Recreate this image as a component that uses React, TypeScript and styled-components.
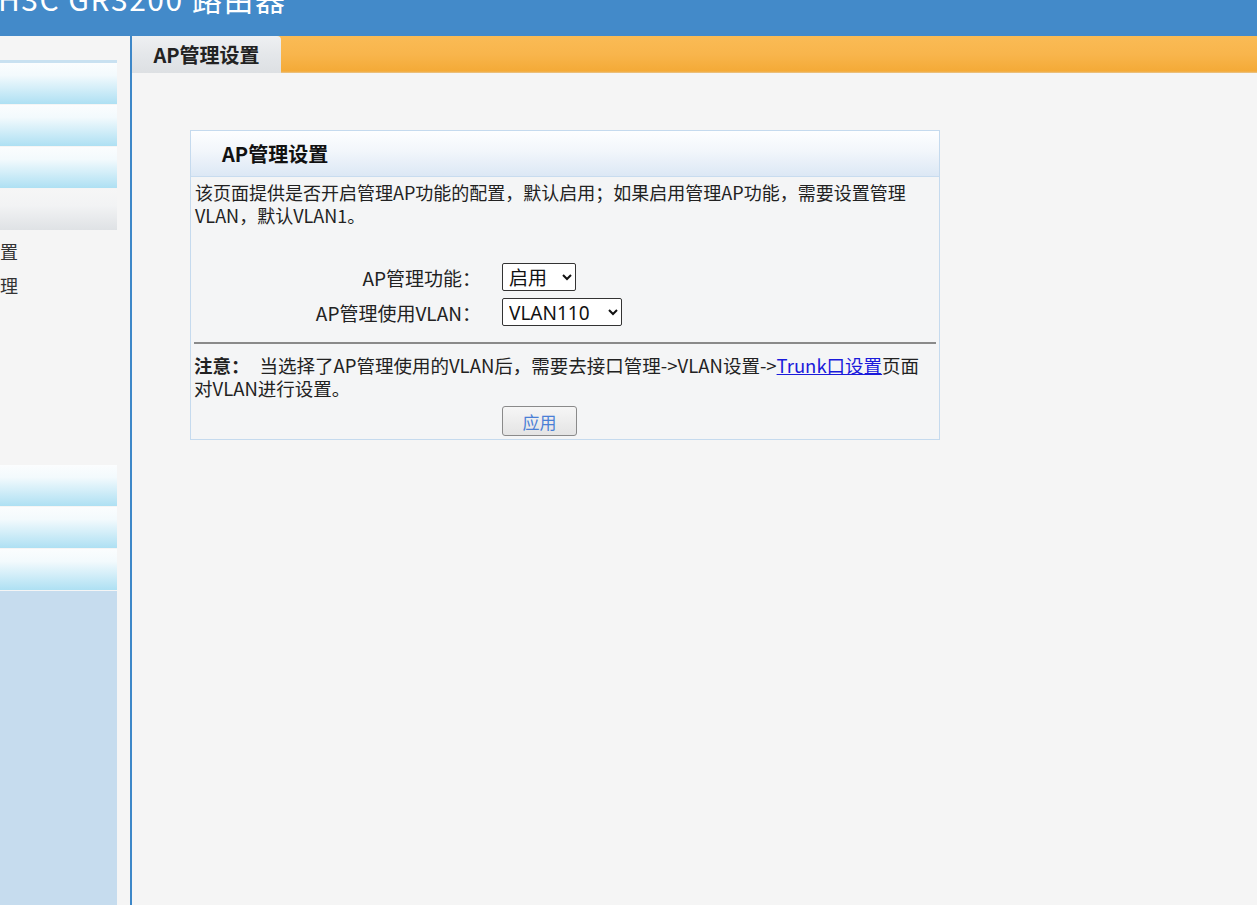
import React from "react";
import styled, { createGlobalStyle } from "styled-components";

const GlobalStyle = createGlobalStyle`
  html, body {
    margin: 0;
    padding: 0;
    background: #f5f5f5;
    overflow: hidden;
  }
  body {
    font-family: "Noto Sans CJK SC", "Noto Sans", sans-serif;
    color: #222;
  }
`;

const Page = styled.div`
  display: flex;
  flex-direction: column;
  height: 905px;
  width: 1257px;
`;

const TopBar = styled.header`
  height: 36px;
  background: #438ac9;
  overflow: hidden;
  flex-shrink: 0;
`;

const Brand = styled.div`
  margin: -17px 0 0 -2px;
  font-size: 30px;
  line-height: 30px;
  letter-spacing: 1.5px;
  color: #fff;
  white-space: nowrap;
`;

const Body = styled.div`
  display: flex;
  flex: 1;
  min-height: 0;
`;

const Sidebar = styled.nav`
  width: 130px;
  flex-shrink: 0;
  border-right: 2px solid #3d87c8;
  display: flex;
  flex-direction: column;
  padding-top: 24px;
  background: #f5f5f5;
`;

const MenuTop = styled.div`
  width: 117px;
  height: 3px;
  background: #c9e1f1;
`;

const MenuItem = styled.div<{ $active?: boolean }>`
  width: 117px;
  height: 41px;
  margin-bottom: 1px;
  background: ${({ $active }) =>
    $active
      ? "linear-gradient(to bottom, #f6f6f6 0%, #f2f3f4 40%, #dfe2e5 100%)"
      : "linear-gradient(to bottom, #fbfdfe 0%, #f3fafd 30%, #aee0f3 100%)"};
`;

const SubList = styled.div`
  padding-top: 3px;
  display: flex;
  flex-direction: column;
`;

const SubItem = styled.div`
  width: 18px;
  height: 34px;
  overflow: hidden;
  display: flex;
  justify-content: flex-end;
  align-items: center;
  white-space: nowrap;
  font-size: 18px;
  color: #333;
`;

const LowerMenu = styled.div`
  margin-top: 163px;
  display: flex;
  flex-direction: column;
`;

const MenuFill = styled.div`
  width: 117px;
  flex: 1;
  background: #c6dcee;
`;

const SidebarRest = styled.div`
  flex: 1;
  display: flex;
  flex-direction: column;
`;

const Main = styled.main`
  flex: 1;
  display: flex;
  flex-direction: column;
  min-width: 0;
`;

const TabBar = styled.div`
  height: 37px;
  display: flex;
  flex-shrink: 0;
  background: linear-gradient(to bottom, #fabb55 0%, #f8b54c 50%, #f4aa37 95%, #e8c690 100%);
`;

const Tab = styled.div`
  width: 149px;
  display: flex;
  align-items: center;
  justify-content: center;
  font-size: 20px;
  font-weight: bold;
  color: #222;
  border-top-right-radius: 4px;
  background: linear-gradient(to bottom, #eef0f2 0%, #e4e7ea 50%, #dde0e3 100%);
`;

const Content = styled.div`
  padding: 57px 0 0 58px;
`;

const Panel = styled.section`
  width: 748px;
  border: 1px solid #c5daee;
  background: #f4f5f6;
`;

const PanelHead = styled.div`
  height: 45px;
  display: flex;
  align-items: center;
  padding-left: 31px;
  font-size: 20px;
  font-weight: bold;
  color: #111;
  border-bottom: 1px solid #c8dcef;
  background: linear-gradient(to bottom, #fdfeff 0%, #f2f6fb 45%, #dce8f5 100%);
`;

const Text = styled.p`
  margin: 0;
  padding: 4px 12px 0 4px;
  font-size: 18px;
  line-height: 23px;
  color: #222;
`;

const Form = styled.div`
  display: grid;
  grid-template-columns: 290px auto;
  column-gap: 21px;
  row-gap: 7px;
  align-items: center;
  padding: 36px 0 16px;
`;

const Label = styled.label`
  justify-self: end;
  font-size: 19px;
  color: #222;
`;

const Select = styled.select<{ $w: number }>`
  justify-self: start;
  width: ${({ $w }) => $w}px;
  height: 28px;
  font-family: "Noto Sans", "Noto Sans CJK SC", sans-serif;
  font-size: 19px;
  color: #111;
  background: #fff;
  border: 1px solid #333;
  border-radius: 2px;
  padding: 0 2px;
`;

const Rule = styled.hr`
  margin: 0 3px;
  border: none;
  border-top: 2px solid #8a8a8a;
`;

const Note = styled.p`
  margin: 0;
  padding: 10px 14px 0 3px;
  font-size: 18.5px;
  line-height: 23px;
  color: #222;

  b {
    margin-right: 10px;
  }
  a {
    color: #1a1adb;
    text-decoration: underline;
  }
`;

const Actions = styled.div`
  display: flex;
  padding: 6px 0 3px 311px;
`;

const ApplyButton = styled.button`
  width: 75px;
  height: 30px;
  font-family: "Noto Sans CJK SC", sans-serif;
  font-size: 17px;
  color: #4a7fd6;
  border: 1px solid #8a8a8a;
  border-radius: 3px;
  background: linear-gradient(to bottom, #f6f6f6, #e4e4e4);
  cursor: pointer;
  padding: 0;
`;

export default function App() {
  return (
    <>
      <GlobalStyle />
      <Page>
        <TopBar>
          <Brand>H3C GR3200 路由器</Brand>
        </TopBar>
        <Body>
          <Sidebar>
            <MenuTop />
            <MenuItem />
            <MenuItem />
            <MenuItem />
            <MenuItem $active />
            <SubList>
              <SubItem>AP管理设置</SubItem>
              <SubItem>AP设备管理</SubItem>
            </SubList>
            <SidebarRest>
              <LowerMenu>
                <MenuItem />
                <MenuItem />
                <MenuItem />
              </LowerMenu>
              <MenuFill />
            </SidebarRest>
          </Sidebar>
          <Main>
            <TabBar>
              <Tab>AP管理设置</Tab>
            </TabBar>
            <Content>
              <Panel>
                <PanelHead>AP管理设置</PanelHead>
                <Text>
                  该页面提供是否开启管理AP功能的配置，默认启用；如果启用管理AP功能，需要设置管理VLAN，默认VLAN1。
                </Text>
                <Form>
                  <Label>AP管理功能：</Label>
                  <Select $w={74} defaultValue="on">
                    <option value="on">启用</option>
                    <option value="off">禁用</option>
                  </Select>
                  <Label>AP管理使用VLAN：</Label>
                  <Select $w={120} defaultValue="110">
                    <option value="1">VLAN1</option>
                    <option value="110">VLAN110</option>
                  </Select>
                </Form>
                <Rule />
                <Note>
                  <b>注意：</b>当选择了AP管理使用的VLAN后，需要去接口管理-&gt;VLAN设置-&gt;
                  <a href="#">Trunk口设置</a>页面对VLAN进行设置。
                </Note>
                <Actions>
                  <ApplyButton>应用</ApplyButton>
                </Actions>
              </Panel>
            </Content>
          </Main>
        </Body>
      </Page>
    </>
  );
}
